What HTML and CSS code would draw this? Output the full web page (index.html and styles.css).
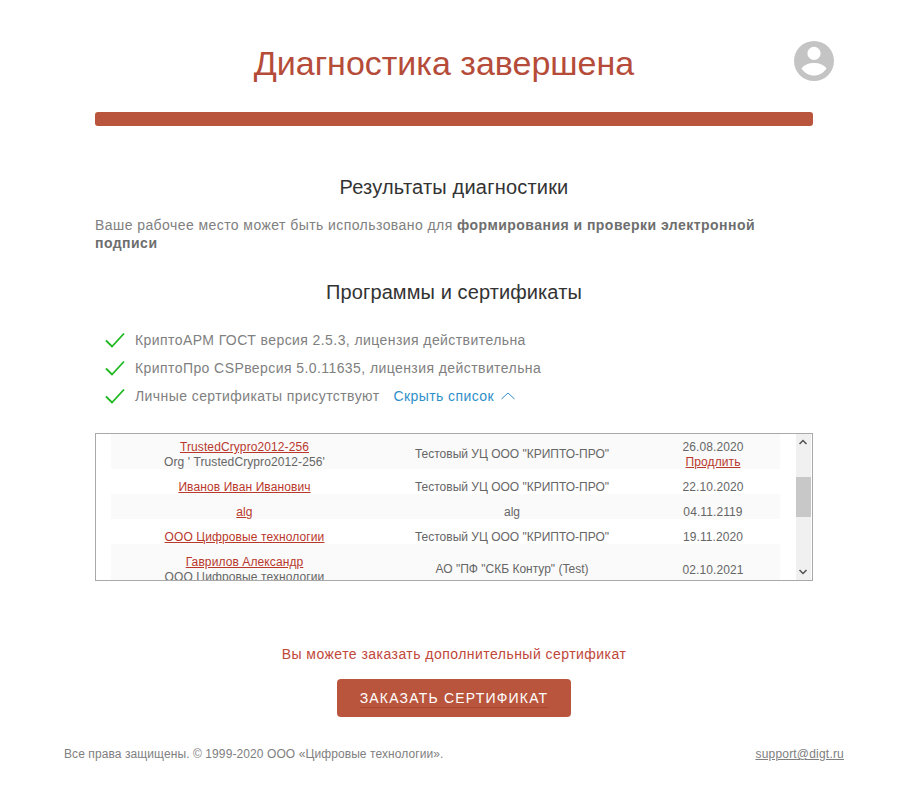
FILE: index.html
```html
<!DOCTYPE html>
<html lang="ru">
  <head>
    <meta charset="UTF-8" />
    <meta name="viewport" content="width=device-width, initial-scale=1.0" />
    <title>Диагностика завершена</title>
    <link rel="stylesheet" href="styles.css">
  </head>
  <body>
    <div class="page">
      <header class="header">
        <h1>Диагностика завершена</h1>
        <svg class="user-icon" viewBox="0 0 40 40" width="40" height="40">
          <path fill-rule="evenodd" d="M20 0a20 20 0 1 0 0 40a20 20 0 0 0 0-40zM20 5.800a6.600 6.600 0 1 1 0 13.200a6.600 6.600 0 0 1 0-13.200zM7.500 27.500C9.500 24 15 22 20 22s10.500 2 12.500 5.500C29.500 32 25 34.500 20 34.500S10.500 32 7.500 27.500z" />
        </svg>
      </header>
      <div class="progress"></div>

      <h2 class="results-title">Результаты диагностики</h2>
      <p class="summary">Ваше рабочее место может быть использовано для <b>формирования и проверки электронной подписи</b></p>

      <h2 class="programs-title">Программы и сертификаты</h2>
      <ul class="checks">
        <li>
          <svg class="check" viewBox="0 0 20 16" width="20" height="16"><path d="M1 8.500L7 14.500L19 1.500" /></svg>
          <span>КриптоАРМ ГОСТ версия 2.5.3, лицензия действительна</span>
        </li>
        <li>
          <svg class="check" viewBox="0 0 20 16" width="20" height="16"><path d="M1 8.500L7 14.500L19 1.500" /></svg>
          <span>КриптоПро CSPверсия 5.0.11635, лицензия действительна</span>
        </li>
        <li>
          <svg class="check" viewBox="0 0 20 16" width="20" height="16"><path d="M1 8.500L7 14.500L19 1.500" /></svg>
          <span>Личные сертификаты присутствуют</span>
          <a class="toggle" href="#">Скрыть список</a>
          <svg class="toggle-arrow" viewBox="0 0 14 8" width="14" height="8"><path d="M0.500 7L7 1L13.500 7" /></svg>
        </li>
      </ul>

      <div class="cert-frame">
        <div class="certs">
          <div class="cert-row tall">
            <div><a href="#">TrustedCrypro2012-256</a><br>Org ' TrustedCrypro2012-256'</div>
            <div class="c-issuer">Тестовый УЦ ООО "КРИПТО-ПРО"</div>
            <div>26.08.2020<br><a href="#">Продлить</a></div>
          </div>
          <div class="cert-row">
            <div><a href="#">Иванов Иван Иванович</a></div>
            <div class="c-issuer">Тестовый УЦ ООО "КРИПТО-ПРО"</div>
            <div>22.10.2020</div>
          </div>
          <div class="cert-row">
            <div><a href="#">alg</a></div>
            <div class="c-issuer">alg</div>
            <div>04.11.2119</div>
          </div>
          <div class="cert-row">
            <div><a href="#">ООО Цифровые технологии</a></div>
            <div class="c-issuer">Тестовый УЦ ООО "КРИПТО-ПРО"</div>
            <div>19.11.2020</div>
          </div>
          <div class="cert-row tall">
            <div><a href="#">Гаврилов Александр</a><br>ООО Цифровые технологии</div>
            <div class="c-issuer">АО "ПФ "СКБ Контур" (Test)</div>
            <div>02.10.2021</div>
          </div>
        </div>
        <div class="scrollbar">
          <svg class="arrow arrow-up" viewBox="0 0 8 6" width="8" height="6"><path d="M0.500 5L4 1.500L7.500 5" /></svg>
          <div class="thumb"></div>
          <svg class="arrow arrow-down" viewBox="0 0 8 6" width="8" height="6"><path d="M0.500 1L4 4.500L7.500 1" /></svg>
        </div>
      </div>

      <p class="order-note">Вы можете заказать дополнительный сертификат</p>
      <div class="order-row"><button class="order-btn">Заказать сертификат</button></div>
    </div>

    <footer class="footer">
      <span>Все права защищены. © 1999-2020 ООО «Цифровые технологии».</span>
      <a href="#">support@digt.ru</a>
    </footer>
  </body>
</html>
```

FILE: styles.css
```css
html,
body {
  margin: 0;
  padding: 0;
  background-color: #fff;
}

body {
  font-family: "Liberation Sans", Arial, sans-serif;
  color: #808080;
  height: 789px;
  overflow: hidden;
}

.page {
  width: 718px;
  margin: 0 auto;
}

/* шапка */
.header {
  position: relative;
  height: 112px;
}

.header h1 {
  margin: 0;
  padding: 42px 20px 0 0;
  font-size: 34px;
  line-height: 43px;
  font-weight: normal;
  text-align: center;
  color: #b54c39;
}

.user-icon {
  position: absolute;
  right: -21px;
  top: 41px;
  fill: #c4c4c4;
}

.progress {
  height: 14px;
  border-radius: 3px;
  background-color: #b9553d;
}

h2 {
  margin: 0;
  font-weight: normal;
  font-size: 20px;
  line-height: 24px;
  letter-spacing: 0.1px;
  text-align: center;
  color: #333;
}

.results-title {
  margin-top: 49px;
  letter-spacing: 0.2px;
}

.summary {
  margin: 17px 0 0;
  font-size: 14px;
  line-height: 18px;
  letter-spacing: 0.43px;
  color: #808080;
}

.summary b {
  letter-spacing: 0.47px;
  color: #6e6e6e;
}

.programs-title {
  margin-top: 28px;
}

/* список проверок */
.checks {
  list-style: none;
  margin: 22px 0 0;
  padding: 0 0 0 10px;
}

.checks li {
  display: flex;
  align-items: center;
  height: 28px;
  font-size: 14px;
  letter-spacing: 0.42px;
}

.check {
  margin-right: 10px;
  fill: none;
  stroke: #1fb81f;
  stroke-width: 1.8;
}

.toggle {
  margin-left: 14px;
  color: #2f8fc9;
  text-decoration: none;
}

.toggle-arrow {
  margin-left: 7px;
  fill: none;
  stroke: #2f8fc9;
  stroke-width: 1;
}

/* таблица сертификатов */
.cert-frame {
  position: relative;
  height: 146px;
  margin-top: 23px;
  padding-left: 15px;
  border: 1px solid #a9a9a9;
  overflow: hidden;
}

/* список прокручен на 5px, поэтому первая строка срезана сверху */
.certs {
  width: 669px;
  margin-top: -5px;
  font-size: 12px;
  line-height: 15px;
  letter-spacing: 0.1px;
  color: #666;
  text-align: center;
}

.cert-row {
  display: grid;
  grid-template-columns: 267px 268px 134px;
  align-items: center;
  box-sizing: border-box;
  height: 25px;
  padding-top: 11px;
}

.cert-row.tall {
  height: 40px;
}

.cert-row:nth-child(odd) {
  background-color: #fafafa;
}

.cert-row a {
  color: #b9382c;
}

.c-issuer {
  letter-spacing: 0;
}

.cert-row.tall .c-issuer {
  margin-top: -2px;
}

.scrollbar {
  position: absolute;
  top: 0;
  bottom: 0;
  right: 1px;
  width: 15px;
  background-color: #f0f0f0;
}

.thumb {
  position: absolute;
  top: 43px;
  left: 0;
  right: 0;
  height: 40px;
  background-color: #c8c8c8;
}

.arrow {
  position: absolute;
  left: 3px;
  fill: none;
  stroke: #505050;
  stroke-width: 1.5;
}

.arrow-up {
  top: 5px;
}

.arrow-down {
  bottom: 5px;
}

/* заказ */
.order-note {
  margin: 64px 0 0;
  font-size: 14px;
  line-height: 18px;
  letter-spacing: 0.46px;
  text-align: center;
  color: #c0473a;
}

.order-row {
  display: flex;
  justify-content: center;
  margin-top: 16px;
}

.order-btn {
  width: 234px;
  height: 38px;
  padding: 0;
  border: 0;
  border-radius: 4px;
  background-color: #b9553d;
  color: #fff;
  font-family: inherit;
  font-size: 14px;
  letter-spacing: 1.2px;
  text-transform: uppercase;
  text-decoration: underline;
  text-decoration-color: #a8492f;
  text-underline-offset: 4px;
}

.footer {
  display: flex;
  justify-content: space-between;
  width: 780px;
  margin: 29px auto 0;
  font-size: 12px;
  line-height: 16px;
  letter-spacing: 0.09px;
  color: #808080;
}

.footer a {
  letter-spacing: 0.2px;
  color: #808080;
}
```
